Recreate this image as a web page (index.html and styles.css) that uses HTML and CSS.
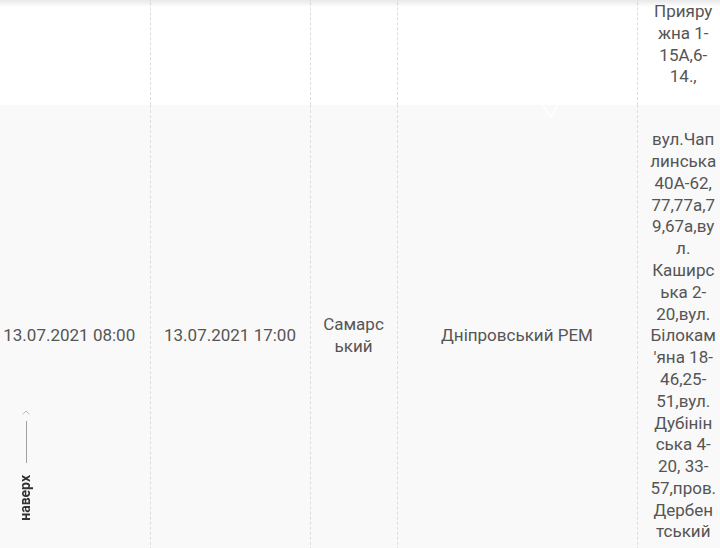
FILE: index.html
```html
<!DOCTYPE html>
<html lang="uk">
<head>
<meta charset="utf-8">
<title>Графік відключень</title>
<link rel="stylesheet" href="styles.css">
</head>
<body>
<div class="viewport">
  <table class="schedule">
    <colgroup>
      <col class="c-start">
      <col class="c-end">
      <col class="c-town">
      <col class="c-rem">
      <col class="c-addr">
    </colgroup>
    <tbody>
      <tr class="row">
        <td>13.07.2021 08:00</td>
        <td>13.07.2021 17:00</td>
        <td>Самарський</td>
        <td>Дніпровський РЕМ</td>
        <td>вул. Гетьманська 2-18,вул. Шкільна 3-27,вул. Садова 1-9,вул. Молодіжна 4-30,вул. Польова 1-21,вул. Прияружна 1-15А,6-14.,</td>
      </tr>
      <tr class="row row-alt">
        <td>13.07.2021 08:00</td>
        <td>13.07.2021 17:00</td>
        <td>Самарський</td>
        <td>Дніпровський РЕМ</td>
        <td>вул.Чаплинська 40А-62,<wbr>77,77а,79,67а,вул. Каширська 2-20,вул. Білокам'яна 18-46,25-51,вул. Дубінін<wbr>ська 4-20, 33-57,пров. Дербен<wbr>тський</td>
      </tr>
    </tbody>
  </table>
  <svg class="mark" width="20" height="20" viewBox="0 0 20 20" aria-hidden="true">
    <path d="M2 1 L9.5 13.5 Q13 9 17 1" fill="none" stroke="#ffffff" stroke-width="1.4" stroke-linecap="round"/>
  </svg>
</div>
<div class="top-shadow"></div>
<a class="to-top" href="#">
  <svg class="to-top-caret" width="8" height="5" viewBox="0 0 8 5" aria-hidden="true">
    <polyline points="0.8,4.3 4,1 7.2,4.3" fill="none" stroke="#bbbbbb" stroke-width="1"/>
  </svg>
  <span class="to-top-line"></span>
  <span class="to-top-text">наверх</span>
</a>
</body>
</html>
```
FILE: styles.css
```css
html, body {
  margin: 0;
  padding: 0;
  overflow: hidden;
  background: #ffffff;
}

body {
  font-family: Roboto, "Noto Sans", sans-serif;
  color: #555555;
}

.viewport {
  position: relative;
  height: 548px;
  overflow: hidden;
}

.schedule {
  border-collapse: collapse;
  table-layout: fixed;
  width: 740px;
  margin-left: -11px;
  margin-top: -351px;
}

.c-start { width: 161px; }
.c-end { width: 160px; }
.c-town { width: 87px; }
.c-rem { width: 240px; }
.c-addr { width: 92px; }

.schedule td {
  border-left: 1px dashed #dddddd;
  padding: 25px 12px 17px;
  text-align: center;
  vertical-align: middle;
  font-size: 17px;
  line-height: 21.8px;
  overflow-wrap: anywhere;
}

.schedule td:first-child {
  border-left: none;
}

.row-alt td {
  padding-top: 24px;
  padding-bottom: 52px;
  background: #f9f9f9;
}

.mark {
  position: absolute;
  left: 541px;
  top: 104px;
}

.top-shadow {
  position: fixed;
  top: 0;
  left: 0;
  right: 0;
  height: 7px;
  background: linear-gradient(rgba(0, 0, 0, 0.09), rgba(0, 0, 0, 0));
  pointer-events: none;
}

.to-top {
  position: fixed;
  left: 16px;
  top: 410px;
  width: 20px;
  display: flex;
  flex-direction: column;
  align-items: center;
  text-decoration: none;
}

.to-top-caret {
  display: block;
}

.to-top-line {
  display: block;
  width: 1px;
  height: 42px;
  margin-top: 6px;
  background: #a0a0a0;
}

.to-top-text {
  margin-top: 12px;
  margin-right: 3px;
  writing-mode: vertical-rl;
  transform: rotate(180deg);
  font-size: 14px;
  font-weight: 700;
  line-height: 14px;
  color: #333333;
}
```
